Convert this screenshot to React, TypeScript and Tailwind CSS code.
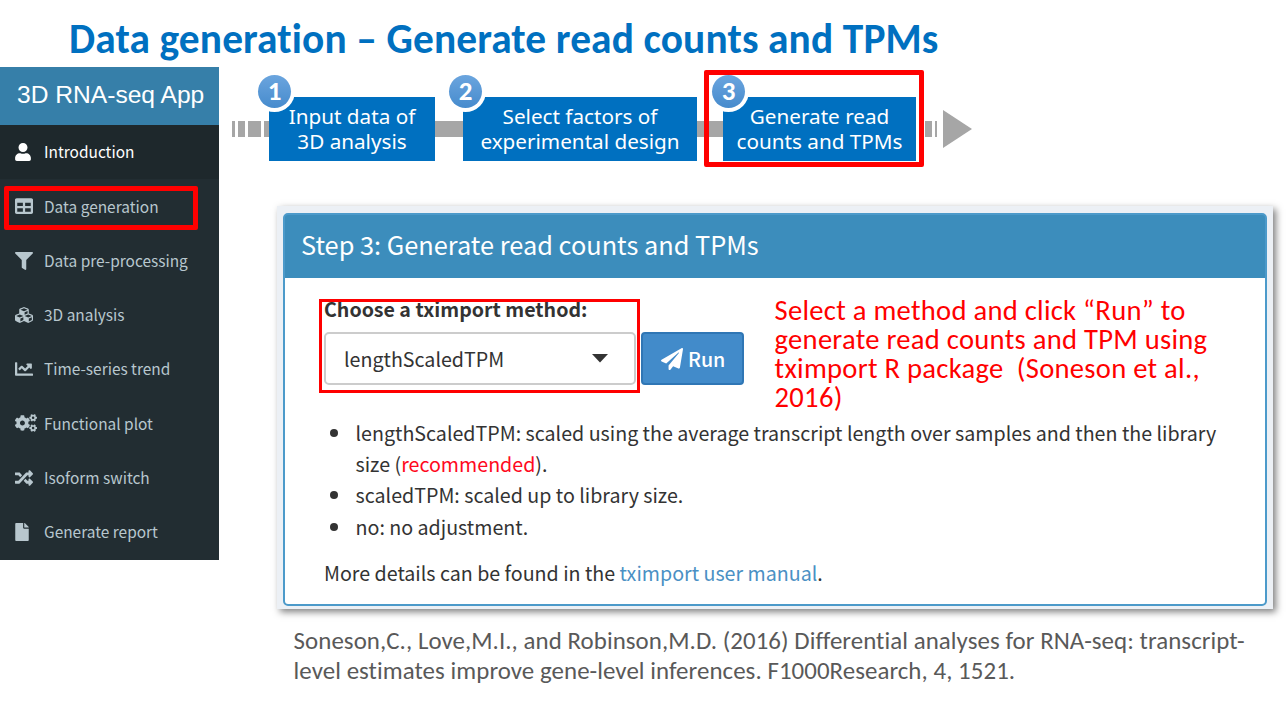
import type { ReactNode } from "react";
import type { IconType } from "react-icons";
import {
  FaUser,
  FaTable,
  FaFilter,
  FaCubes,
  FaChartLine,
  FaCogs,
  FaRandom,
  FaFile,
  FaPaperPlane,
} from "react-icons/fa";

const NAV: { label: string; icon: IconType; size: number; nudge?: string }[] = [
  { label: "Introduction", icon: FaUser, size: 18, nudge: "-ml-px mr-px" },
  { label: "Data generation", icon: FaTable, size: 18 },
  { label: "Data pre-processing", icon: FaFilter, size: 18 },
  { label: "3D analysis", icon: FaCubes, size: 18 },
  { label: "Time-series trend", icon: FaChartLine, size: 18 },
  { label: "Functional plot", icon: FaCogs, size: 22 },
  { label: "Isoform switch", icon: FaRandom, size: 18 },
  { label: "Generate report", icon: FaFile, size: 18, nudge: "-ml-0.5 mr-0.5" },
];

function Sidebar() {
  return (
    <aside className="flex h-[493px] w-[219px] shrink-0 flex-col bg-[#222d32] font-['Noto_Sans_CJK_SC',sans-serif] text-[15.45px] text-[#b8c7ce]">
      <div className="flex h-[58px] items-center whitespace-nowrap bg-[#367fa9] pb-px pl-[17px] font-['Liberation_Sans',sans-serif] text-[24.6px] text-white">
        3D RNA-seq App
      </div>
      <nav className="flex flex-1 flex-col pb-px">
        {NAV.map(({ label, icon: Icon, size, nudge }, i) => (
          <a
            key={label}
            className={
              i === 0
                ? "relative flex flex-1 items-center bg-[#1e282c] pl-[15px] text-white"
                : "relative flex flex-1 items-center pl-[15px]"
            }
          >
            <span className={`flex w-[29px] items-center ${nudge ?? ""}`}>
              <Icon size={size} className="shrink-0" />
            </span>
            <span className="whitespace-nowrap leading-none">{label}</span>
            {i === 1 && (
              <span className="absolute left-1 top-[7px] h-11 w-[194px] rounded-[2px] border-[5px] border-[#ff0000]" />
            )}
          </a>
        ))}
      </nav>
    </aside>
  );
}

function Step({ n, className, badge, children }: { n: number; className: string; badge: string; children: ReactNode }) {
  return (
    <div className={`relative flex h-16 shrink-0 flex-col items-center bg-[#0070c0] pt-[7px] text-center leading-[25px] ${className}`}>
      {children}
      <span className={`absolute -top-[26px] flex size-[41px] items-center justify-center overflow-hidden rounded-full bg-white ${badge}`}>
        <span className="flex size-[33px] items-center justify-center rounded-full bg-linear-to-b from-[#6ba5de] to-[#468bcd] pb-0.5 font-['Carlito','Open_Sans',sans-serif] text-[27px] font-bold leading-none text-white">
          {n}
        </span>
      </span>
    </div>
  );
}

function Steps() {
  return (
    <div className="relative flex h-[94px] items-center pl-[13px] pt-[23px] font-['Noto_Sans',sans-serif] text-[20.7px] text-white">
      <div className="flex h-4 gap-[3px]">
        <i className="w-[3px] bg-[#a6a6a6]" />
        <i className="w-[7px] bg-[#a6a6a6]" />
        <i className="w-[13px] bg-[#a6a6a6]" />
        <i className="w-[5px] bg-[#a6a6a6]" />
      </div>
      <Step n={1} className="w-[166px]" badge="-left-[15px]">
        <span className="whitespace-nowrap">Input data of</span>
        <span className="whitespace-nowrap">3D analysis</span>
      </Step>
      <i className="h-4 w-7 bg-[#a6a6a6]" />
      <Step n={2} className="w-[234px]" badge="-left-[18px]">
        <span className="whitespace-nowrap">Select factors of</span>
        <span className="whitespace-nowrap">experimental design</span>
      </Step>
      <i className="h-4 w-[26px] bg-[#a6a6a6]" />
      <Step n={3} className="w-[193px]" badge="-left-[15px]">
        <span className="whitespace-nowrap">Generate read</span>
        <span className="whitespace-nowrap">counts and TPMs</span>
      </Step>
      <i className="ml-[9px] h-4 w-[7px] bg-[#a6a6a6]" />
      <i className="ml-[3px] h-4 w-[2px] bg-[#a6a6a6]" />
      <svg className="ml-[6px]" width="29" height="38" viewBox="0 0 29 38">
        <path d="M0 0L29 19L0 38Z" fill="#a6a6a6" />
      </svg>
      <span className="absolute left-[485px] top-0 h-[97px] w-[220px] rounded-[2px] border-[5px] border-[#ff0000]" />
    </div>
  );
}

function Panel() {
  return (
    <section className="ml-[58px] mt-[42px] h-[403px] w-[996px] bg-[#ecf0f5] pb-[3px] pl-[6px] pr-[6px] pt-[7px] font-['Noto_Sans_CJK_SC',sans-serif] text-[19.65px] text-[#333] shadow-[3px_3px_7px_rgba(0,0,0,0.5)]">
      <div className="flex h-full flex-col rounded-[5px] border-2 border-[#4c9aca] bg-[#3c8dbc]">
        <h2 className="flex h-[63px] shrink-0 items-center whitespace-nowrap pb-1 pl-4 text-[25.35px] text-white">
          Step 3: Generate read counts and TPMs
        </h2>
        <div className="min-h-0 flex-1 rounded-b-[3px] bg-white">
          <div className="flex h-[133px] pl-[39px]">
            <div className="pt-4">
              <label className="block whitespace-nowrap text-[19.6px] font-bold leading-[29px]">
                Choose a tximport method:
              </label>
              <div className="mt-[9px] flex gap-[5px]">
                <div className="relative flex h-[53px] w-[312px] items-center justify-between rounded-[5px] border-2 border-[#ccc] pl-[18px] pr-[26px]">
                  <span>lengthScaledTPM</span>
                  <svg width="16" height="9" viewBox="0 0 16 9">
                    <path d="M0 0H16L8 8.5Z" fill="#333" />
                  </svg>
                  <span className="absolute -left-[7px] -top-[35px] h-[94px] w-[321px] border-[3px] border-[#ff0000]" />
                </div>
                <button className="flex h-[53px] w-[103px] items-center gap-[5px] rounded-[4px] border-2 border-[#2f76b5] bg-[#428bca] pl-[18px] font-medium text-white">
                  <FaPaperPlane size={22} />
                  Run
                </button>
              </div>
            </div>
            <p className="ml-[30.6px] whitespace-pre pt-[18px] font-['Carlito','Lato',sans-serif] text-[28.6px] leading-[29px] tracking-[0.27px] text-[#ff0000] [font-variant-ligatures:none]">
              {"Select a method and click “Run” to\ngenerate read counts and TPM using\ntximport R package  (Soneson et al.,\n2016)"}
            </p>
          </div>
          <ul className="ml-[70.5px] list-none pt-[6px] leading-[31.2px]">
            {[
              <>
                lengthScaledTPM: scaled using the average transcript length over samples and then the library
                <br />
                size (<span className="text-[#ff0a1e]">recommended</span>).
              </>,
              <>scaledTPM: scaled up to library size.</>,
              <>no: no adjustment.</>,
            ].map((item, i) => (
              <li key={i} className="relative whitespace-nowrap">
                <span className="absolute -left-[25.5px] top-[12px] size-2 rounded-full bg-[#333]" />
                {item}
              </li>
            ))}
          </ul>
          <p className="ml-[39px] mt-[15px] leading-[31px]">
            More details can be found in the <a className="text-[#4a90c4]">tximport user manual</a>.
          </p>
        </div>
      </div>
    </section>
  );
}

export default function App() {
  return (
    <div className="h-[701px] w-[1286px] overflow-hidden bg-white">
      <h1 className="h-[67px] whitespace-nowrap pl-[69px] pt-[14px] font-['Carlito','Lato',sans-serif] text-[41.4px] font-bold leading-[50px] tracking-[0.13px] text-[#0070c0] [font-variant-ligatures:none]">
        Data generation – Generate read counts and TPMs
      </h1>
      <div className="flex items-start">
        <Sidebar />
        <main className="pt-[3px]">
          <Steps />
          <Panel />
          <p className="ml-[74.6px] mt-[17px] whitespace-pre font-['Carlito','Lato',sans-serif] text-[24.9px] leading-[30px] tracking-[0.06px] text-[#595959] [font-variant-ligatures:none]">
            {"Soneson,C., Love,M.I., and Robinson,M.D. (2016) Differential analyses for RNA-seq: transcript-\nlevel estimates improve gene-level inferences. F1000Research, 4, 1521."}
          </p>
        </main>
      </div>
    </div>
  );
}
